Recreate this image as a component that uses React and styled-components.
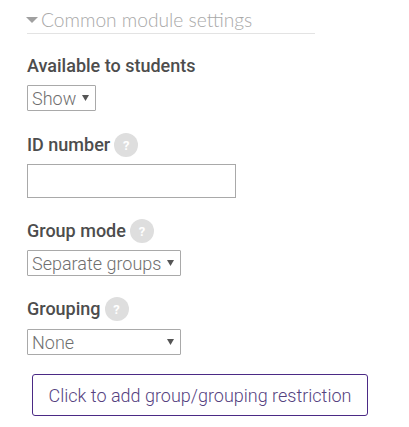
import styled, { createGlobalStyle } from "styled-components";

const GlobalStyle = createGlobalStyle`
  html, body {
    margin: 0;
    padding: 0;
    background: #fff;
    font-family: Roboto, "Liberation Sans", sans-serif;
  }
`;

const arrow =
  "url(\"data:image/svg+xml,%3Csvg xmlns='http://www.w3.org/2000/svg' width='7' height='6'%3E%3Cpath d='M0 0h7L3.5 6z' fill='%23555'/%3E%3C/svg%3E\")";

const Wrapper = styled.div`
  width: 409px;
  height: 427px;
  box-sizing: border-box;
  padding: 9px 0 0 27px;
  overflow: hidden;
`;

const Legend = styled.div`
  width: 288px;
  height: 24px;
  box-sizing: content-box;
  display: flex;
  align-items: flex-start;
  gap: 3px;
  border-bottom: 1px solid #e3e3e3;
  color: #a8a8a8;
  font-family: Lato, sans-serif;
  font-size: 19.2px;
  font-weight: 300;
  line-height: 22px;
`;

const Caret = styled.span`
  width: 0;
  height: 0;
  border-left: 6px solid transparent;
  border-right: 6px solid transparent;
  border-top: 6px solid #a0a0a0;
  margin: 8px 0 0 -1px;
`;

const Field = styled.div`
  margin-top: ${({ $top }) => $top}px;
`;

const LabelRow = styled.div`
  height: 24px;
  display: flex;
  align-items: center;
  gap: 4px;
  margin-bottom: ${({ $gap }) => $gap}px;
`;

const Label = styled.label`
  color: #4d4d4d;
  font-size: 18px;
  font-weight: 500;
  line-height: 24px;
`;

const Help = styled.span`
  width: 24px;
  height: 24px;
  border-radius: 50%;
  background: #dedede;
  color: #fff;
  font-size: 13px;
  font-weight: 700;
  display: flex;
  align-items: center;
  justify-content: center;
`;

const Select = styled.select`
  display: block;
  box-sizing: border-box;
  width: ${({ $width }) => $width}px;
  height: 26px;
  padding: 0 0 0 4px;
  appearance: none;
  background: #fff ${arrow} no-repeat right 6px center;
  border: 1px solid #a9a9a9;
  border-radius: 1px;
  color: #6f6f6f;
  font-family: Roboto, sans-serif;
  font-size: 18px;
  font-weight: 300;
  outline: none;
`;

const TextInput = styled.input`
  display: block;
  box-sizing: border-box;
  width: 209px;
  height: 34px;
  background: #fff;
  border: 1px solid #a9a9a9;
  border-radius: 0;
  outline: none;
`;

const RestrictionButton = styled.button`
  display: block;
  box-sizing: border-box;
  width: 336px;
  height: 42px;
  margin: 19px 0 0 5px;
  padding: 0;
  background: #fff;
  border: 1px solid #4b2a85;
  border-radius: 3px;
  color: #55427f;
  font-family: Roboto, sans-serif;
  font-size: 18px;
  font-weight: 300;
`;

const HelpLabel = ({ children, gap }) => (
  <LabelRow $gap={gap}>
    <Label>{children}</Label>
    <Help>?</Help>
  </LabelRow>
);

export default function App() {
  return (
    <Wrapper>
      <GlobalStyle />
      <Legend>
        <Caret />
        Common module settings
      </Legend>
      <Field $top={20}>
        <LabelRow $gap={7}>
          <Label>Available to students</Label>
        </LabelRow>
        <Select $width={69} defaultValue="Show">
          <option>Show</option>
          <option>Hide</option>
        </Select>
      </Field>
      <Field $top={22}>
        <HelpLabel gap={7}>ID number</HelpLabel>
        <TextInput type="text" />
      </Field>
      <Field $top={21}>
        <HelpLabel gap={7}>Group mode</HelpLabel>
        <Select $width={154} defaultValue="Separate groups">
          <option>No groups</option>
          <option>Separate groups</option>
          <option>Visible groups</option>
        </Select>
      </Field>
      <Field $top={21}>
        <HelpLabel gap={8}>Grouping</HelpLabel>
        <Select $width={154} defaultValue="None">
          <option>None</option>
        </Select>
      </Field>
      <RestrictionButton type="button">Click to add group/grouping restriction</RestrictionButton>
    </Wrapper>
  );
}
